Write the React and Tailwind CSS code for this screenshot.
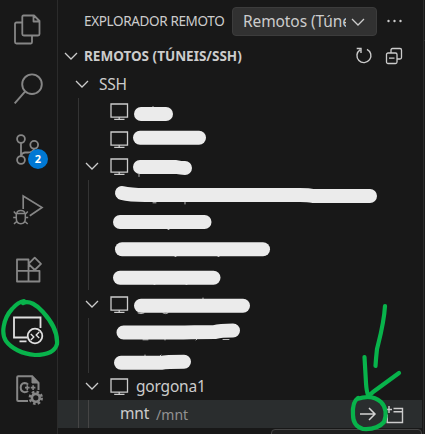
import React from "react";

const Chevron = ({ className = "" }) => (
  <svg className={`shrink-0 ${className}`} width="14" height="14" viewBox="0 0 14 14" fill="none" stroke="#cccccc" strokeWidth="1.3">
    <path d="M1 4 L7 10 L13 4" />
  </svg>
);

const Monitor = () => (
  <svg className="shrink-0" width="20" height="20" viewBox="0 0 20 20" fill="none" stroke="#cccccc" strokeWidth="1.3">
    <path d="M1 3H17.5V16.2H1Z M9.2 16.2V18 M4.2 18.4H14.5" />
  </svg>
);

const Files = () => (
  <svg width="32" height="32" viewBox="0 0 32 32" fill="none" stroke="#868686" strokeWidth="1.8" strokeLinejoin="round">
    <path d="M10.5 1.5H21L26.5 7V20Q26.5 21.5 25 21.5H10.8Q9.3 21.5 9.3 20V3Q9.3 1.5 10.5 1.5Z M20.5 2V7.5H26 M9 8.5H3.5Q2 8.5 2 10V28Q2 29.5 3.5 29.5H18Q19 29.5 19 28V22" />
  </svg>
);

const Search = () => (
  <svg width="32" height="32" viewBox="0 0 32 32" fill="none" stroke="#868686" strokeWidth="1.9">
    <circle cx="19" cy="11.2" r="9.8" />
    <path d="M12.2 18.4L1.7 30.3" />
  </svg>
);

const Branch = () => (
  <svg width="32" height="32" viewBox="0 0 32 32" fill="none" stroke="#868686" strokeWidth="1.8">
    <circle cx="8" cy="5" r="3.9" />
    <circle cx="21.2" cy="10.8" r="3.9" />
    <circle cx="8" cy="26" r="3.9" />
    <path d="M8 9V22 M21.2 14.8Q20 18.5 15 18.5H12Q8.5 19 8.2 22" />
  </svg>
);

const Debug = () => (
  <svg width="32" height="32" viewBox="0 0 32 32" fill="none" stroke="#868686" strokeWidth="1.7">
    <path d="M10.2 15V2L29 13.5L16.8 21.7" />
    <path d="M3.3 19.5V24.5Q3.3 29.7 7.8 29.7Q12.3 29.7 12.3 24.5V19.5Z M3.8 19.5Q4 16.5 7.8 16.5Q11.6 16.5 11.8 19.5 M0.8 17.5L3.5 20.5 M14.8 17.5L12 20.5 M0.2 23.5H3 M12.5 23.5H15.2 M4 27L1 30 M11.5 27L14.7 30" strokeWidth="1.5" />
  </svg>
);

const Extensions = () => (
  <svg width="32" height="32" viewBox="0 0 32 32" fill="none" stroke="#868686" strokeWidth="1.8" strokeLinejoin="round">
    <path d="M4 5.5H15.5V27.5H4Z M4 16.8H26.5V27.5H15.5 M21.7 3.7L28 9.8L21.7 16L15.5 9.8Z" />
  </svg>
);

const Remote = () => (
  <svg width="32" height="32" viewBox="0 0 32 32" fill="none" stroke="#e0e0e0" strokeWidth="1.8">
    <path d="M14 22.5H1V2.5H27.5V13 M6.5 26.3H13.5" />
    <circle cx="22" cy="21" r="7.3" />
    <path d="M17.8 19L20.8 22L17.8 25 M26.2 17L23.2 20L26.2 23" strokeWidth="1.4" />
  </svg>
);

const CppConfig = () => (
  <svg width="32" height="32" viewBox="0 0 32 32" fill="none" stroke="#868686" strokeWidth="2">
    <path d="M15 26H5.2Q4.2 26 4.2 25V2.3Q4.2 1.3 5.2 1.3H19.2L25.5 8V15" />
    <path d="M19 1V8H26Z" fill="#868686" strokeWidth="1" />
    <path d="M15 9.7Q13.8 8 11.7 8Q7.7 8.4 7.7 12.6Q7.7 16.8 11.7 17.2Q13.8 17.2 15 15.8" />
    <path d="M12 12.6H16.6 M14.3 10.3V15 M17.8 12.6H22.4 M20.1 10.3V15" strokeWidth="1.6" />
    <circle cx="22.8" cy="22.8" r="6" fill="#181818" stroke="#181818" strokeWidth="2.5" />
    <circle cx="22.8" cy="22.8" r="3.9" strokeWidth="2.6" />
    <circle cx="22.8" cy="22.8" r="5.9" strokeWidth="2.6" strokeDasharray="2.5 2.134" />
  </svg>
);

const activities = [
  { Icon: Files, box: "h-[59px]" },
  { Icon: Search, box: "h-[60px]" },
  { Icon: Branch, box: "h-[61px]", badge: "2" },
  { Icon: Debug, box: "h-[59px]" },
  { Icon: Extensions, box: "h-[61px]" },
  { Icon: Remote, box: "h-[61px]" },
  { Icon: CppConfig, box: "h-[60px]" },
];

const rows = ["host", "host", "open", "path", "path", "path", "path", "open", "path", "path", "gorgona1"];

const Row = ({ kind }) => {
  const host = kind !== "path";
  const expandable = host && kind !== "host";
  return (
    <div className="flex h-[27.5px] shrink-0 items-center pl-[20px]">
      <div className="h-full w-px shrink-0 bg-[#343434]" />
      <div className="flex h-full w-[31px] shrink-0 items-center pl-[6px]">
        {expandable ? <Chevron /> : !host && <div className="ml-[3px] h-full w-px bg-[#343434]" />}
      </div>
      {host && <Monitor />}
      {kind === "gorgona1" && <span className="ml-[6px] text-[15.5px] tracking-[-0.2px]">gorgona1</span>}
    </div>
  );
};

const masks = [
  "M141 114H166",
  "M140 137.8H199",
  "M140 167H176Q181 168 185 168",
  "M122 193Q130 195 145 195H300Q309 195 313 196H370",
  "M120 222H204.5",
  "M122 249.3H263",
  "M120 277.7H213.5",
  "M141 305.8H243",
  "M123.5 332.5H183Q190 332 215 332Q220 330.5 233 330.5",
  "M121 362.8H161Q166 361.8 184 361.8",
];

const Annotations = () => (
  <svg className="pointer-events-none absolute inset-0" width="425" height="434" viewBox="0 0 425 434" fill="none" strokeLinecap="round" strokeLinejoin="round">
    <g stroke="#b8b8b8" strokeWidth="1">
      <path d="M153 106.5V109 M139 174V176.5 M153 202.8H156 M185 202V204 M168 229.5H169 M175 256.5H176 M218 256.5H219 M154 284.5H155 M186 284.5H187 M138 313Q141 314.5 144 313 M163 313Q166 314.5 168 313 M203 299V298 M143 339.8H148 M165 339.5V340 M197 339L196 340 M223 339.5H229 M145 355V356 M160 356L161 355" />
    </g>
    <g stroke="#ebebeb" strokeWidth="14">
      {masks.map((d) => <path key={d} d={d} />)}
    </g>
    <g stroke="#08b34b" strokeWidth="4.2">
      <path d="M24 301Q18 302 12 309C3 319 1 334 6 341C11 348 22 354 35 355C46 355 55 352 57 344C58 331 51 321 43 312C37 305 29 300 23 303" />
      <path d="M385 306C384 323 380 337 377 349Q376 358 375.5 366 M364.5 357L366 383Q366.5 391 368 395Q369 396 373 392L399 373" />
      <path d="M357 399Q372 394 381 402C386 407 387 415 384 422Q377 430 363 429Q353 426 353 415Q352 402 358 398" />
    </g>
  </svg>
);

export default function App() {
  return (
    <div className="relative flex h-[434px] w-[425px] overflow-hidden bg-[#181818] font-['Noto_Sans','Open_Sans',sans-serif] text-[#cccccc]">
      <nav className="flex w-[58px] shrink-0 flex-col border-r border-[#2b2b2b]">
        {activities.map(({ Icon, box, badge }, i) => (
          <div key={i} className={`relative flex shrink-0 items-center justify-center ${box}`}>
            <Icon />
            {badge && (
              <span className="absolute left-[28px] top-[30px] flex h-5 w-5 items-center justify-center rounded-full bg-[#0078d4] font-['Open_Sans'] text-[11px] font-bold text-white">
                {badge}
              </span>
            )}
          </div>
        ))}
      </nav>
      <main className="flex min-w-0 flex-1 flex-col">
        <header className="flex h-[42px] shrink-0 items-center pl-[26px]">
          <h1 className="w-[148px] shrink-0 whitespace-nowrap pt-px text-[13.5px] tracking-[-0.35px]">EXPLORADOR REMOTO</h1>
          <button className="flex h-[29px] w-[145px] shrink-0 items-center rounded-sm border border-[#3c3c3c] bg-[#313131] pl-[10px]">
            <span className="w-[103px] shrink-0 overflow-hidden whitespace-nowrap pt-[2px] text-left text-[15.5px] tracking-[-0.1px]">Remotos (Túneis/SSH)</span>
            <Chevron className="ml-[5px] mt-px" />
          </button>
          <svg className="ml-[9px]" width="18" height="4" viewBox="0 0 18 4" fill="#cccccc">
            <circle cx="2.5" cy="2" r="1.2" /><circle cx="8.5" cy="2" r="1.2" /><circle cx="14.5" cy="2" r="1.2" />
          </svg>
        </header>
        <div className="flex h-[28px] shrink-0 items-center pl-[6px]">
          <Chevron />
          <h2 className="ml-[6px] whitespace-nowrap pt-px text-[13.5px] font-bold tracking-[0px]">REMOTOS (TÚNEIS/SSH)</h2>
          <svg className="ml-auto" width="20" height="20" viewBox="0 0 20 20" fill="none" stroke="#cccccc" strokeWidth="1.4">
            <path d="M6 3.8A7 7 0 1 0 13 3.3 M2.7 2.5H7V7" />
          </svg>
          <svg className="ml-[10px] mr-[19px]" width="20" height="20" viewBox="0 0 20 20" fill="none" stroke="#cccccc" strokeWidth="1.3">
            <rect x="2.5" y="7" width="10.5" height="10.5" rx="1.5" />
            <path d="M7 7V4Q7 2.5 8.5 2.5H16Q17.5 2.5 17.5 4V11.5Q17.5 13 16 13H13 M5 12.2H10.5" />
          </svg>
        </div>
        <div className="flex h-[27.5px] shrink-0 items-center pl-[17px]">
          <Chevron />
          <span className="ml-[10px] pt-[2px] text-[15.5px] tracking-[-0.3px]">SSH</span>
        </div>
        {rows.map((kind, i) => <Row key={i} kind={kind} />)}
        <div className="mr-px flex h-[28px] shrink-0 items-center bg-[#2a2d2e] pl-[20px]">
          <div className="h-full w-px bg-[#454545]" />
          <div className="ml-[9px] h-full w-px bg-[#454545]" />
          <span className="ml-[31px] text-[15.5px] tracking-[-0.2px]">mnt</span>
          <span className="ml-[7px] text-[14px] text-[#929292]">/mnt</span>
          <svg className="ml-auto" width="18" height="18" viewBox="0 0 18 18" fill="none" stroke="#d4d4d4" strokeWidth="1.5">
            <path d="M1 9H16 M10 3L16 9L10 15" />
          </svg>
          <svg className="ml-[8px] mr-[18px]" width="19" height="19" viewBox="0 0 19 19" fill="none" stroke="#cccccc" strokeWidth="1.4">
            <path d="M0 4.5H7 M4 1V8 M8.5 3.5H17.5V17.5H2.2V9.5 M8.5 6.8H17.5" />
          </svg>
        </div>
        <div className="ml-[213px] mr-px mt-[0.5px] h-4 shrink-0 rounded-t border border-[#454545] bg-[#202020]" />
      </main>
      <div className="flex w-[2px] shrink-0 flex-col border-l border-[#2b2b2b]">
        <div className="h-[41px] border-b border-[#2b2b2b]" />
      </div>
      <Annotations />
    </div>
  );
}
